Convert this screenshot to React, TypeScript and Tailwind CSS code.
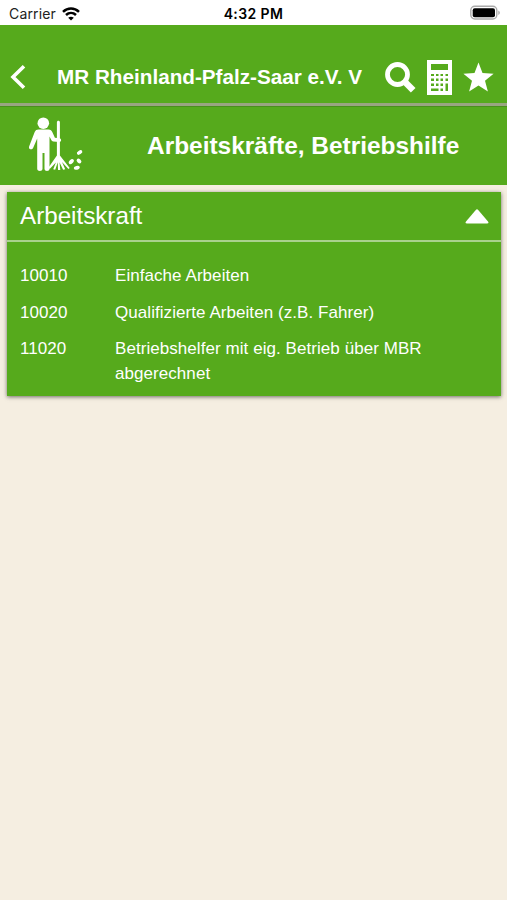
import React from 'react';

interface ServiceItem {
  code: string;
  label: string;
}

const items: ServiceItem[] = [
  { code: '10010', label: 'Einfache Arbeiten' },
  { code: '10020', label: 'Qualifizierte Arbeiten (z.B. Fahrer)' },
  { code: '11020', label: 'Betriebshelfer mit eig. Betrieb über MBR abgerechnet' },
];

function StatusBar() {
  return (
    <div className="grid h-[25px] grid-cols-3 items-center bg-white pr-[7px] pl-[9px] font-['Inter',sans-serif] text-black">
      <div className="flex items-center gap-[6px] pt-[2px]">
        <span className="text-[14px] leading-none tracking-[0.15px] text-[#222]">Carrier</span>
        <svg width="18" height="14" viewBox="0 0 18 14" fill="none" stroke="currentColor" strokeWidth="2.5">
          <path d="M1 4.8C5.6 .4 12.4 .4 17 4.8" />
          <path d="M4 8C6.9 5.2 11.1 5.2 14 8" />
          <path d="M9 13.6L6.2 10.7C7.9 9.3 10.1 9.3 11.8 10.7Z" fill="currentColor" stroke="none" />
        </svg>
      </div>
      <span className="pt-[2px] pr-[2px] text-center text-[14px] leading-none font-semibold tracking-[0.4px] whitespace-nowrap">
        4:32 PM
      </span>
      <svg className="justify-self-end" width="31" height="15" viewBox="0 0 31 15">
        <rect x="1.8" y="1.3" width="26" height="12.700" rx="4" fill="#fff" stroke="#aaa" strokeWidth="1.4" />
        <rect x="3.7" y="3.2" width="22.3" height="9" rx="2" fill="#000" />
        <path d="M29.300 5.500c2 1 2 3.400 0 4.400z" fill="#aaa" />
      </svg>
    </div>
  );
}

function CalculatorIcon() {
  return (
    <svg width="25" height="35" viewBox="0 0 25 35">
      <path fill="#fff" d="M0 0h25v35H0z" />
      <g fill="#56aa1c">
        <path d="M4 4h17v6H4z" />
        <path d="M4 14h3v2H4zM9 14h2.5v2H9zM13.5 14H16v2h-2.500zM18.500 14h2.500v2h-2.500z" />
        <path d="M4 18.500h3v2.500H4zM9 18.500h2.500V21H9zM13.500 18.500H16V21h-2.500zM18.500 18.500h2.500V21h-2.500z" />
        <path d="M4 23.500h3V26H4zM9 23.500h2.500V26H9zM13.500 23.500H16V26h-2.500zM18.500 23.500h2.500V31h-2.500z" />
        <path d="M4 28.500h7.500V31H4zM13.500 28.500H16V31h-2.500z" />
      </g>
    </svg>
  );
}

function NavBar() {
  return (
    <header className="flex h-[81px] items-center border-b-[3px] border-[#99a580] pt-[26px] pr-[13px] pl-[10px] text-white">
      <button className="w-[47px]" aria-label="Zurück">
        <svg width="16" height="24" viewBox="0 0 16 24" fill="none" stroke="#fff" strokeWidth="3.6">
          <path d="M14 1.300L3 12l11 10.700" />
        </svg>
      </button>
      <h1 className="w-[306px] overflow-hidden text-[20.7px] leading-[26px] font-bold whitespace-nowrap">
        MR Rheinland-Pfalz-Saar e.V. V
      </h1>
      <div className="ml-auto flex items-center gap-[11px]">
        <svg width="31" height="31" viewBox="0 0 31 31" fill="none" stroke="#fff">
          <circle cx="12.500" cy="12.500" r="10" strokeWidth="4.800" />
          <path d="M19.500 19.500l8.700 8.700" strokeWidth="6.500" />
        </svg>
        <CalculatorIcon />
        <svg width="31" height="31" viewBox="0 0 31 31" fill="#fff">
          <path d="M15.500.500l4 10.600 11.100.6-8.600 7 2.900 10.800-9.400-6-9.400 6L9 18.700l-8.600-7 11.100-.6z" />
        </svg>
      </div>
    </header>
  );
}

// Worker with a broom and a few leaves
function WorkerIcon() {
  return (
    <svg className="mb-[3px]" width="56" height="56" viewBox="0 0 56 56" fill="#fff">
      <circle cx="15.300" cy="6.200" r="5.800" />
      <path d="M10.500 12.500h10c2 0 3.300 1 4 3l2.400 5.300 4.600.4c2.300.2 2.100 3.800-.2 3.700l-6-.4c-1-.1-1.600-.6-2-1.500l-1.800-3.500v32.300c0 3-5 3-5 0V36h-2v15.800c0 3-5.300 3-5.300 0V21.500L5.100 31c-1 2.600-5 1.200-4-1.600L6.700 15c.7-1.700 2-2.500 3.800-2.500z" />
      <path d="M28.900 5.300c0-2 3-2 3 0v33.200l9.800 12.500-1.300.9-6.400-7 3.200 7.300-2.100.5-3.600-7.400.8 7.600h-2.300l-.2-7.600-2.600 7.500-2-.6 2.700-6.800-6 6.300-1.700-.8 8.700-12.300z" />
      <ellipse cx="51.600" cy="35.500" rx="3" ry="1.900" transform="rotate(-32 51.600 35.500)" />
      <ellipse cx="43.300" cy="44.700" rx="3" ry="1.900" transform="rotate(-45 43.300 44.700)" />
      <ellipse cx="51" cy="44" rx="2.700" ry="1.900" transform="rotate(42 51 44)" />
      <ellipse cx="48.800" cy="50.800" rx="3" ry="1.900" transform="rotate(-14 48.800 50.800)" />
    </svg>
  );
}

export default function App() {
  return (
    <div className="min-h-[900px] w-[507px] bg-[#f5eee1] font-['Liberation_Sans',sans-serif]">
      <StatusBar />
      <div className="bg-[#56aa1c]">
        <NavBar />
        <div className="flex h-[79px] items-center border-t border-[#4a8f1c] pl-[28px] text-white">
          <WorkerIcon />
          <h2 className="ml-[63px] text-[24.45px] leading-[30px] font-bold whitespace-nowrap">
            Arbeitskräfte, Betriebshilfe
          </h2>
        </div>
      </div>

      <section className="mt-[7px] mr-[6px] ml-[7px] h-[204px] bg-[#56aa1c] text-white shadow-[0_1px_4px_rgba(0,0,0,0.55)]">
        <button className="flex h-[50px] w-full items-center justify-between border-b-2 border-[#a9d18d] pr-[12px] pl-[13px]">
          <span className="text-[24.2px]">Arbeitskraft</span>
          <svg width="24" height="15" viewBox="0 0 24 15" fill="#fff">
            <path d="M10.800 1q1.200-1.300 2.400 0L23 12.500q1.300 2-1 2H2q-2.300 0-1-2z" />
          </svg>
        </button>
        <ul className="flex flex-col gap-[12px] pt-[22px] pl-[13px] text-[17px] leading-[24.500px] tracking-[0.06px]">
          {items.map((item) => (
            <li key={item.code} className="flex">
              <span className="w-[95px] shrink-0">{item.code}</span>
              <span className="w-[340px]">{item.label}</span>
            </li>
          ))}
        </ul>
      </section>
    </div>
  );
}
